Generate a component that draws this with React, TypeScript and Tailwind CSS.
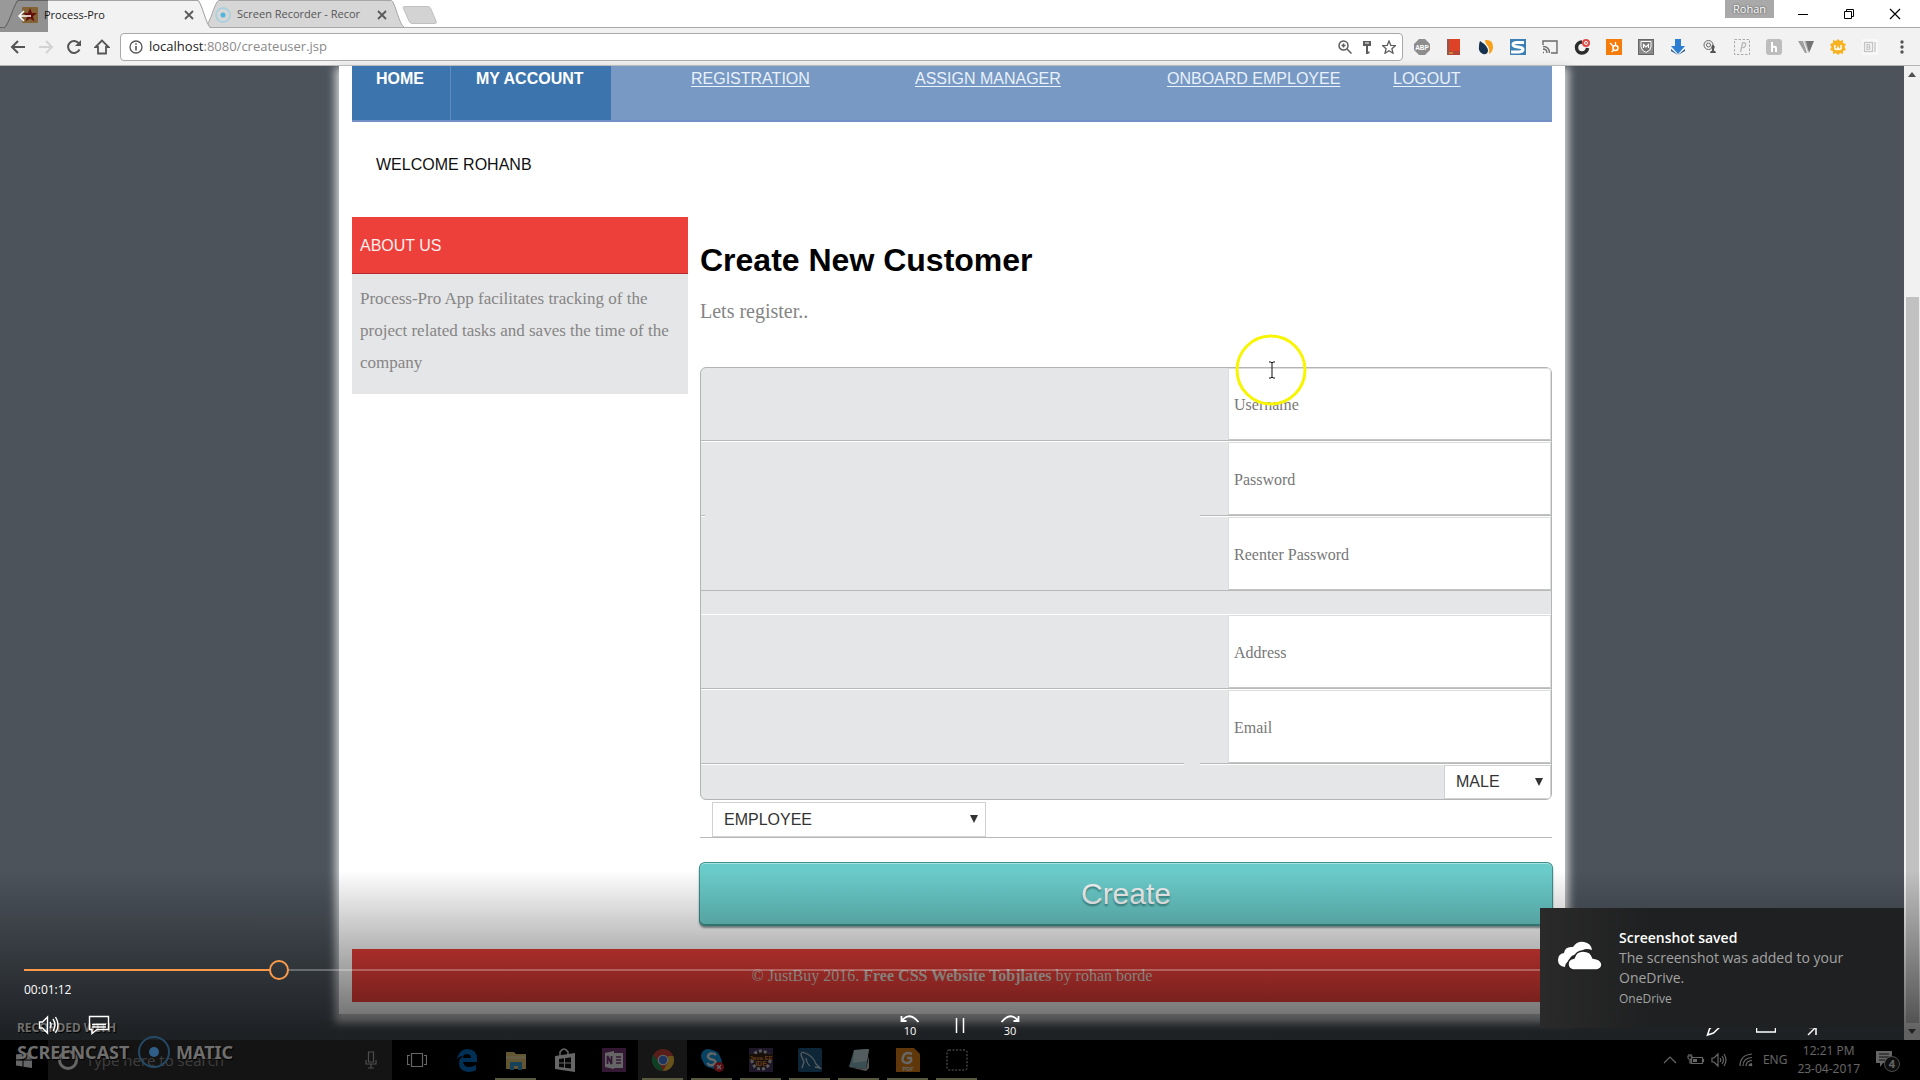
import React from "react";

type Box = { children: React.ReactNode; className?: string; vb?: string };

const Icon = ({ children, className = "size-5", vb = "0 0 20 20" }: Box) => (
  <svg viewBox={vb} className={className} fill="none" stroke="currentColor" strokeWidth="2" aria-hidden="true">
    {children}
  </svg>
);

/* ---------- browser chrome ---------- */

const CloseX = () => (
  <Icon className="size-2.5 shrink-0 text-[#5a5a5a]" vb="0 0 10 10">
    <path d="M1 1l8 8M9 1l-8 8" strokeWidth="1.8" />
  </Icon>
);

function TabShape({ fill }: { fill: string }) {
  return (
    <svg className="absolute inset-0 size-full" viewBox="0 0 205 28" preserveAspectRatio="none" aria-hidden="true">
      <path d="M0 28 C5 26 10 2 14 0.5 H192 C196 2 200 26 205 28" fill={fill} stroke="#a3a3a3" />
    </svg>
  );
}

function TabStrip() {
  return (
    <div className="relative flex h-7 items-stretch border-b border-[#a8a8a8] bg-white">
      <button className="relative z-10 ml-1 -mb-px flex w-[207px] items-center pt-0.5 pl-[18px] pr-[17px] text-left">
        <TabShape fill="#f2f2f2" />
        <svg viewBox="0 0 16 16" className="relative size-4 shrink-0" aria-hidden="true">
          <rect width="16" height="16" rx="1" fill="#dba659" />
          <path d="M8 1l2 5h5l-4 3.500 1.500 5L8 11.500 3.500 14.500 5 9.500 1 6h5z" fill="#a81c12" />
        </svg>
        <span className="relative ml-1.5 flex-1 text-[11px] text-[#222]">Process-Pro</span>
        <span className="relative"><CloseX /></span>
      </button>
      <button className="relative -ml-1.5 flex w-[199px] items-center pt-0.5 pl-2.5 pr-[17px] text-left">
        <TabShape fill="#d6d6d6" />
        <svg viewBox="0 0 16 16" className="relative size-4 shrink-0" aria-hidden="true">
          <circle cx="8" cy="8" r="7" fill="none" stroke="#9fcfe0" strokeWidth="1.300" />
          <circle cx="8" cy="8" r="2.500" fill="#4db5de" />
        </svg>
        <span className="relative ml-1.5 flex-1 overflow-hidden whitespace-nowrap text-[11px] text-[#555]">
          Screen Recorder - Recor
        </span>
        <span className="relative ml-2"><CloseX /></span>
      </button>
      <button aria-label="New tab" className="mt-1.5 -ml-0.5 h-[18px] w-9">
        <svg viewBox="0 0 36 18" className="size-full" aria-hidden="true">
          <path d="M1 1.500Q1 .5 3 .5H26Q28 .5 29 3L34 15Q35 17.500 33 17.500H10Q8 17.500 7 15Z" fill="#d3d3d3" stroke="#c0c0c0" />
        </svg>
      </button>
      <div className="flex-1" />
      <div className="mr-[23px] h-[18px] w-[49px] bg-[#a9a9a9] text-center text-[11px] leading-[18px] text-white [text-shadow:0_0_2px_#333]">
        Rohan
      </div>
      <div className="mr-[19px] flex items-center gap-[34px] text-black">
        <button aria-label="Minimize"><Icon className="size-3" vb="0 0 12 12"><path d="M1 6.500h10" strokeWidth="1" /></Icon></button>
        <button aria-label="Restore"><Icon className="size-3" vb="0 0 12 12"><path d="M1.500 3.500h7v7h-7zM3.500 3.500v-2h7v7h-2" strokeWidth="1" /></Icon></button>
        <button aria-label="Close"><Icon className="size-3" vb="0 0 12 12"><path d="M1 1l10 10M11 1L1 11" strokeWidth="1.200" /></Icon></button>
      </div>
    </div>
  );
}

const extensions: { name: string; art: React.ReactNode }[] = [
  { name: "Adblock", art: <><path d="M5 0h6l5 5v6l-5 5H5l-5-5V5z" fill="#8d8d8d" /><text x="8" y="10.500" fontSize="6.500" fontWeight="bold" textAnchor="middle" fill="#fff" fontFamily="Liberation Sans">ABP</text></> },
  { name: "Book", art: <><path d="M2 0h12v12H2z" fill="#dd4227" /><path d="M1 0h2v16H1z" fill="#8a5a50" /><path d="M3 12h11v4H3z" fill="#b5453a" /><path d="M3 13.500h4v1H3z" fill="#f5c12e" /></> },
  { name: "Similar", art: <><path d="M2 2Q10 7 10 12q-1 4-5 3-5-2-4-8 0-3 1-5z" fill="#16324f" /><path d="M7 1q8-1 8 7 0 5-4 7 1-6-2-9-2-2-2-5z" fill="#f9a01b" /></> },
  { name: "S", art: <><rect width="16" height="16" fill="#3d80b5" /><path d="M14 3.500H7q-4 0-4 2T8 8t5 2.500-4 2.500H1" stroke="#fff" strokeWidth="3" fill="none" /></> },
  { name: "Cast", art: <path d="M1 6V2h14v12H9M1 13.500h1M1 10q4 0 4 4M1 7.500q6.500 0 6.500 6.500" stroke="#6a6a6a" strokeWidth="1.400" fill="none" /> },
  { name: "Monitor", art: <><path d="M8 3a5.500 5.500 0 105.500 6" stroke="#2c2c2c" strokeWidth="3.500" fill="none" /><circle cx="12" cy="4" r="4" fill="#e24a4a" /><circle cx="12" cy="4" r="1.500" stroke="#fff" fill="none" /></> },
  { name: "Sprocket", art: <><rect width="16" height="16" fill="#f57c0a" /><circle cx="9.500" cy="9" r="2.500" stroke="#fff" strokeWidth="1.500" fill="none" /><path d="M9.500 6.500V3M7.500 7.500L4 4M8 11l-2.500 2" stroke="#fff" strokeWidth="1.300" /></> },
  { name: "Shield", art: <><rect x=".5" y=".5" width="15" height="15" fill="#8a8a8a" stroke="#666" /><path d="M3 2.500h10v5q0 4-5 6-5-2-5-6z" stroke="#fff" fill="#777" /><path d="M5.500 9V5.500L8 8l2.500-2.500V9" stroke="#fff" fill="none" strokeWidth="1.200" /></> },
  { name: "Download", art: <><path d="M5 0h6v7h4l-7 8-7-8h4z" fill="#2c7fd0" /><path d="M1 10l7 6 7-6v2l-7 4-7-4z" fill="#1d558f" /></> },
  { name: "Search people", art: <><circle cx="6.500" cy="6" r="4.500" stroke="#666" fill="none" /><circle cx="6.500" cy="6" r="2" stroke="#666" fill="none" /><path d="M8 14q0-2 2-2.500V10q-1-1-.5-3 1.500-2 3 0 .5 2-.5 3v1.500q2 .5 2 2.500z" fill="#555" /></> },
  { name: "Pin", art: <><rect x=".5" y=".5" width="15" height="15" stroke="#aaa" strokeDasharray="2.500 1.500" fill="none" /><path d="M6.500 13l2-9q4-1 3 2.500-1 2.500-3.500 2" stroke="#bbb" strokeWidth="1.400" fill="none" /></> },
  { name: "Honey", art: <><rect width="16" height="16" rx="3" fill="#bdbdbd" /><path d="M6 3v10M10 13V9q0-2-4-1" stroke="#fff" strokeWidth="2" fill="none" /></> },
  { name: "V", art: <><path d="M0 2h5l4 12H7z" fill="#a0a0a0" /><path d="M6 2h5l-1 11z" fill="#b5b5b5" /><path d="M8 2h8l-5 12z" fill="#747474" /></> },
  { name: "Gear", art: <><path d="M8 0l2 2 3-1 0 3 3 1-1.500 3L16 11l-3 1v3l-3-1-2 2-2-2-3 1v-3l-3-1 1.500-3L0 5l3-1V1l3 1z" fill="#f8b21f" /><path d="M5 6q-1 5 2 4.500l1-2 1 2q3 0 2-4.500" stroke="#fff" strokeWidth="1.500" fill="none" /></> },
  { name: "B", art: <><rect width="16" height="16" fill="#f8f8f8" /><rect x="2.500" y="3.500" width="8" height="9" stroke="#c4c4c4" strokeWidth="1.300" /><path d="M5 5.500h2q1.500 1.200 0 2.500 2 1.200 0 2.500H5zM5 8h2.500M13 3v10" stroke="#c2c2c2" strokeWidth="1.200" fill="none" /></> },
];

function Toolbar() {
  return (
    <div className="flex h-[38px] items-center border-b border-[#b3b3b3] bg-[#f2f2f2] text-[#555]">
      <div className="flex w-[120px] items-center gap-3 pl-[10px]">
        <button aria-label="Back"><Icon className="size-4" vb="0 0 16 16"><path d="M15 8H2M8 2L2 8l6 6" /></Icon></button>
        <button aria-label="Forward" className="text-[#d2d2d2]"><Icon className="size-4" vb="0 0 16 16"><path d="M1 8h13M8 2l6 6-6 6" /></Icon></button>
        <button aria-label="Reload"><Icon className="size-4" vb="0 0 16 16"><path d="M13.500 10.500A6 6 0 1113 4.500" /><path d="M15 1v6H9z" fill="currentColor" stroke="none" /></Icon></button>
        <button aria-label="Home"><Icon className="size-4" vb="0 0 16 16"><path d="M8 1.500L1.500 8H4v6.500h8V8h2.500z" strokeWidth="1.800" /></Icon></button>
      </div>
      <div className="flex h-7 flex-1 items-center rounded-sm border border-[#a9a9a9] bg-white pr-1.5 pl-2">
        <Icon className="size-3.5 shrink-0" vb="0 0 14 14"><circle cx="7" cy="7" r="6" strokeWidth="1.300" /><path d="M7 6v4.500M7 3.200v1.600" strokeWidth="1.600" /></Icon>
        <div className="ml-1.5 flex-1 text-[13px]">
          <span className="text-[#222]">localhost</span><span className="text-[#8a8a8a]">:8080/createuser.jsp</span>
        </div>
        <div className="flex gap-2 text-[#5c5c5c]">
          <Icon className="size-3.5" vb="0 0 14 14"><circle cx="5.500" cy="5.500" r="4.500" strokeWidth="1.500" /><path d="M9 9l4.500 4.500M3.500 5.500h4M5.500 3.500v4" strokeWidth="1.500" /></Icon>
          <Icon className="size-3.5" vb="0 0 14 14"><path d="M3 1h8v5H3z" fill="currentColor" stroke="none" /><path d="M7 6v8M7 12.500h2.500" /><path d="M5 3h4" stroke="#fff" strokeWidth="1" /></Icon>
          <Icon className="size-3.5" vb="0 0 14 14"><path d="M7 1l1.800 4.300 4.600.4-3.500 3 1.100 4.500L7 10.800l-4 2.400 1.100-4.500-3.500-3 4.600-.4z" strokeWidth="1.300" /></Icon>
        </div>
      </div>
      <div className="flex items-center gap-4 pl-[11px] pr-[44px]">
        {extensions.map((e) => (
          <button key={e.name} aria-label={e.name}>
            <svg viewBox="0 0 16 16" className="size-4" fill="none" aria-hidden="true">{e.art}</svg>
          </button>
        ))}
      </div>
      <button aria-label="Menu" className="-ml-7 mr-2.5">
        <svg viewBox="0 0 16 16" className="size-4" fill="#555" aria-hidden="true">
          <circle cx="8" cy="3" r="1.700" /><circle cx="8" cy="8" r="1.700" /><circle cx="8" cy="13" r="1.700" />
        </svg>
      </button>
    </div>
  );
}

/* ---------- web page ---------- */

const navLink = "text-[#e9f1fb] underline underline-offset-2";

function Nav() {
  return (
    <nav className="flex h-14 border-b-2 border-[#7390c6] bg-[#7799c4] leading-[26px]">
      <a href="#home" className="w-[99px] border-r border-[#5c8cc0] bg-[#3c74ae] pl-6 font-bold text-white">HOME</a>
      <a href="#account" className="w-40 bg-[#3c74ae] pl-[25px] font-bold text-white">MY ACCOUNT</a>
      <div className="w-20" />
      <div className="w-56"><a href="#registration" className={navLink}>REGISTRATION</a></div>
      <div className="w-[252px]"><a href="#assign" className={navLink}>ASSIGN MANAGER</a></div>
      <div className="w-[226px]"><a href="#onboard" className={navLink}>ONBOARD EMPLOYEE</a></div>
      <a href="#logout" className={navLink}>LOGOUT</a>
    </nav>
  );
}

const Segment = ({ className }: { className: string }) => (
  <div className={"border-t border-b border-t-[#b7b9b9] border-b-white " + className} />
);

function Field({ id, label, type = "text", height = "h-[73px]" }: { id: string; label: string; type?: string; height?: string }) {
  return (
    <div className={"flex " + height}>
      <label htmlFor={id} className="flex-1" />
      <input
        id={id}
        type={type}
        aria-label={label}
        placeholder={label}
        className="w-[323px] border border-[#dcdede] border-b-[#c4c6c6] bg-white px-[5px] pt-0.5 font-['Liberation_Serif',serif] text-base placeholder:text-[#777]"
      />
    </div>
  );
}

function Choice({ id, label, value, className }: { id: string; label: string; value: string; className: string }) {
  return (
    <div className={"relative bg-white " + className}>
      <select id={id} aria-label={label} className="size-full appearance-none border border-[#d0d2d2] pl-[11px] text-base text-[#333]">
        <option>{value}</option>
      </select>
      <svg viewBox="0 0 8 8" className="pointer-events-none absolute top-[13px] right-2 size-2" fill="#333" aria-hidden="true">
        <path d="M0 0h8L4 8z" />
      </svg>
    </div>
  );
}

function CreateForm() {
  return (
    <form onSubmit={(e) => e.preventDefault()}>
      <div className="overflow-hidden rounded-md border border-[#b3b5b5] bg-[#e5e6e8]">
        <Field id="username" label="Username" height="h-[72px]" />
        <Segment className="h-0.5" />
        <Field id="password" label="Password" type="password" />
        <div className="flex justify-between">
          <Segment className="h-0.5 w-1" />
          <Segment className="h-0.5 w-[351px]" />
        </div>
        <Field id="reenter" label="Reenter Password" type="password" />
        <div className="h-[25px] border-t border-[#b7b9b9] border-b border-b-white" />
        <Field id="address" label="Address" />
        <Segment className="h-0.5" />
        <Field id="email" label="Email" />
        <div className="flex gap-4">
          <Segment className="h-0.5 flex-1" />
          <Segment className="h-0.5 w-[351px]" />
        </div>
        <div className="flex justify-end"><Choice id="gender" label="Gender" value="MALE" className="h-[34px] w-[107px]" /></div>
      </div>
      <div className="border-b border-[#b7b9b9] pt-0.5 pl-3">
        <Choice id="role" label="Role" value="EMPLOYEE" className="h-[35px] w-[274px]" />
      </div>
      <button className="-mx-px mt-6 block h-16 w-[calc(100%+2px)] rounded-md border border-[#3f8f8c] border-b-2 bg-[#6accca] text-3xl text-[#f4f4f4] shadow-[0_2px_2px_#8a9a9a,inset_0_1px_0_#a5e4e2] [text-shadow:0_2px_2px_#3b8583]">
        Create
      </button>
    </form>
  );
}

function Page() {
  return (
    <div className="mx-auto max-w-[1226px] bg-white px-[13px] pb-3 shadow-[0_5px_8px_4px_#c8cacc] font-['Liberation_Sans',Arial,sans-serif]">
      <Nav />
      <p className="px-6 pt-[31px] leading-6 text-[#111]">WELCOME ROHANB</p>
      <div className="flex gap-3 pt-10">
        <aside className="w-[336px] shrink-0">
          <h2 className="h-[57px] border-b border-[#b02a2e] bg-[#ee403a] px-2 leading-[58px] text-[#fbeeee]">ABOUT US</h2>
          <p className="h-[120px] bg-[#e5e6e8] px-2 pt-[9px] font-['Liberation_Serif',serif] text-[17px] leading-8 text-[#858585]">
            Process-Pro App facilitates tracking of the project related tasks and saves the time of the company
          </p>
        </aside>
        <main className="flex-1 pt-[23px]">
          <h1 className="text-[32px] leading-10 font-bold text-black">Create New Customer</h1>
          <p className="mt-4 mb-[41px] font-['Liberation_Serif',serif] text-xl leading-[30px] text-[#858585]">Lets register..</p>
          <CreateForm />
        </main>
      </div>
      <footer className="mt-[23px] h-[53px] bg-[#ee403a] text-center font-['Liberation_Serif',serif] text-base leading-[53px] text-[#ddd0c8]">
        © JustBuy 2016. <b>Free CSS Website Tobjlates</b> by rohan borde
      </footer>
    </div>
  );
}

function Scrollbar() {
  return (
    <div className="flex w-4 flex-col items-center bg-[#f1f1f1] text-[#505050]">
      <svg viewBox="0 0 8 5" className="mt-1.5 h-[5px] w-2" fill="currentColor" aria-hidden="true"><path d="M4 0l4 5H0z" /></svg>
      <div className="h-[220px]" />
      <div className="w-[13px] flex-1 bg-[#c1c1c1]" />
      <svg viewBox="0 0 8 5" className="my-1.5 h-[5px] w-2" fill="currentColor" aria-hidden="true"><path d="M0 0h8L4 5z" /></svg>
    </div>
  );
}

/* ---------- taskbar ---------- */

const apps: { name: string; open: boolean; art: React.ReactNode }[] = [
  { name: "Edge", open: false, art: <path d="M2 12Q3 2 12 1q10 0 10 10v3H8q1 5 6 5 4 0 7-2v5q-3 2-8 2-9-1-9-9 0-5 5-7-6 0-7 4zM8 10h8q0-4-4-4t-4 4z" fill="#0078d7" /> },
  { name: "File Explorer", open: true, art: <><path d="M2 4h8l2 2h10v15H2z" fill="#f5d77e" /><path d="M2 8h20v3H2z" fill="#fbe9a8" /><path d="M6 22v-8h12v8h-4v-4h-4v4z" fill="#38a3dc" /></> },
  { name: "Store", open: false, art: <><path d="M2 8l20-3v19L2 21z" fill="#fff" /><path d="M7 8V4q4-6 8 0v3" stroke="#fff" strokeWidth="1.500" fill="none" /><path d="M6 11l5-.7v4.200H6zM12 10.200l6-.9v5.200h-6zM6 15.500h5v4L6 19zM12 15.500h6v5l-6-.8z" fill="#111" /></> },
  { name: "OneNote", open: false, art: <><rect width="24" height="24" fill="#803b80" /><path d="M12 5h9v15h-9zM3 5l9-2v18l-9-2z" fill="#fff" /><path d="M5.500 16V8l4 8V8" stroke="#803b80" strokeWidth="1.800" fill="none" /><path d="M14 9h5M14 12h5M14 15h5" stroke="#803b80" strokeWidth="1.300" /></> },
  { name: "Chrome", open: true, art: <><circle cx="12" cy="12" r="11" fill="#dd4b3e" /><path d="M2.500 6.500l6 9.500L12 23A11 11 0 012.500 6.500z" fill="#1da25f" /><path d="M12 23l5-9V8h5.300A11 11 0 0112 23z" fill="#ffcd42" /><circle cx="12" cy="12" r="5.300" fill="#fff" /><circle cx="12" cy="12" r="4.200" fill="#4a86ee" /></> },
  { name: "Skype", open: true, art: <><circle cx="8" cy="8" r="7" fill="#12a5f4" /><circle cx="15" cy="14" r="7" fill="#12a5f4" /><circle cx="11.500" cy="11" r="9" fill="#12a5f4" /><path d="M16 7q-2-2-5-1.500T8 9q1 2 4 2.500t3.500 2.500-3 3-5-2" stroke="#fff" strokeWidth="2.400" fill="none" /><circle cx="19" cy="19" r="5" fill="#e0202c" /><path d="M17 17l4 4M21 17l-4 4" stroke="#fff" strokeWidth="1.300" /></> },
  { name: "Java EE IDE", open: true, art: <><rect width="24" height="24" fill="#4c3a68" /><circle cx="12" cy="12" r="9" stroke="#ddd" strokeWidth="3" strokeDasharray="3 2" fill="#3b2a30" /><rect y="6" width="24" height="6" fill="#3b2418" /><text x="12" y="11.500" fontSize="6" fontWeight="bold" textAnchor="middle" fill="#f2963a" fontFamily="Liberation Sans">Java EE</text><text x="12" y="18" fontSize="7" fontWeight="bold" textAnchor="middle" fill="#f2963a" fontFamily="Liberation Sans">IDE</text></> },
  { name: "MySQL Workbench", open: true, art: <><rect width="24" height="24" rx="2" fill="#23618c" /><path d="M4 20L6 14 3 7q0-4 4-2 8 3 11 11l4 4-5-1M8 10q1 6 4 8" stroke="#d8e6ef" strokeWidth="1.300" fill="none" /></> },
  { name: "Notes", open: true, art: <><path d="M7 2l15-1-3 20-17-2z" fill="#8fc6cf" /><path d="M7 2l15-1-2 12-14 2z" fill="#cfe7ea" /><path d="M2 19l17 2 3-13v12l-3 3z" fill="#d9d6cf" /></> },
  { name: "PDF", open: true, art: <><path d="M0 0h18l6 6v18H0z" fill="#ef8a17" /><path d="M16 6q-7-3-9 3t5 6q4-1 3-5h-4" stroke="#fff" strokeWidth="2.500" fill="none" /><text x="12" y="22.500" fontSize="5.500" fontWeight="bold" textAnchor="middle" fill="#fff" fontFamily="Liberation Sans">PDF</text></> },
  { name: "Snip", open: true, art: <rect x="2" y="2" width="20" height="20" rx="2" stroke="#eee" strokeDasharray="2 1.500" fill="none" /> },
];

function Taskbar() {
  return (
    <div className="flex h-10 items-stretch bg-black text-white">
      <button aria-label="Start" className="w-12 pl-4">
        <svg viewBox="0 0 16 16" className="size-4" fill="#fff" aria-hidden="true"><path d="M0 2.500l6.500-1v6H0zM7.500 1.300L16 0v7.500H7.500zM0 8.500h6.500v6l-6.500-1zM7.500 8.500H16V16l-8.500-1.300z" /></svg>
      </button>
      <div className="flex w-[344px] items-center bg-[#323232] pl-2.5 pr-[11px]">
        <div className="size-5 shrink-0 rounded-full border-[3px] border-white" />
        <input aria-label="Type here to search" placeholder="Type here to search" className="ml-2 flex-1 bg-transparent text-[15px] placeholder:text-[#9c9c9c]" />
        <Icon className="size-5 text-[#c0c0c0]"><path d="M7.500 2h5v10h-5zM5 10v4h10v-4M10 14v4M7 18h6" strokeWidth="1.200" /></Icon>
      </div>
      <button aria-label="Task View" className="grid w-[50px] place-items-center">
        <Icon className="size-5"><path d="M4.500 3.500h11v13h-11zM3 5.500H.5v9H3M17 5.500h2.500v9H17" strokeWidth="1.200" /></Icon>
      </button>
      {apps.map((a) => (
        <button
          key={a.name}
          aria-label={a.name}
          className={"relative grid w-[49px] place-items-center " + (a.name === "Chrome" ? "bg-[#363636]" : "")}
        >
          <svg viewBox="0 0 24 24" className="size-6" fill="none" aria-hidden="true">{a.art}</svg>
          {a.open && <span className="absolute inset-x-1 bottom-0 h-0.5 bg-[#e0e0a0]" />}
        </button>
      ))}
      <div className="flex-1" />
      <div className="flex items-center gap-2.5 pr-5 text-xs">
        <Icon className="size-3.5" vb="0 0 14 14"><path d="M1 10l6-6 6 6" strokeWidth="1.200" /></Icon>
        <div className="flex items-center gap-1.5">
          <Icon className="h-4 w-[18px]" vb="0 0 18 16"><path d="M4.500 5.500h11v6h-11zM16.500 7v3M1 4h4v2q-2 3-4 0zM3 7v4h1M2 2v2M4 2v2" strokeWidth="1.200" /><path d="M6 7h4v3H6z" fill="currentColor" stroke="none" /></Icon>
          <Icon className="size-4" vb="0 0 16 16"><path d="M1 6h2l4-4v12L3 10H1zM9 6q1.500 2 0 4M11 4q3 4 0 8M13 2q4 6 0 12" strokeWidth="1.200" /></Icon>
          <Icon className="ml-1.5 size-3.5" vb="0 0 14 14"><path d="M1 13Q1 2 13 1M4 13Q4 5 13 4.500M7 13q0-5 6-5.500M10 13q0-2 3-2.500" strokeWidth="1.200" /><circle cx="12" cy="12" r="1.300" fill="currentColor" stroke="none" /></Icon>
        </div>
        <span>ENG</span>
        <div className="text-center leading-[18px]"><div>12:21 PM</div><div>23-04-2017</div></div>
        <button aria-label="Notifications" className="relative ml-1.5 size-6">
          <svg viewBox="0 0 24 24" className="size-6" aria-hidden="true">
            <path d="M0 3h16v12H7l-3 4v-4H0z" fill="#fff" />
            <path d="M3 6h10M3 9h10M3 12h6" stroke="#222" />
            <circle cx="16" cy="16" r="7.500" fill="#222" stroke="#bbb" />
          </svg>
          <span className="absolute right-1 bottom-0 w-2 text-[11px] font-bold">4</span>
        </button>
      </div>
    </div>
  );
}

/* ---------- overlays ---------- */

function PlayerControls() {
  return (
    <div className="absolute inset-x-0 bottom-10 h-20 text-white">
      <input
        aria-label="Seek"
        type="range"
        step={0.01}
        defaultValue={13.23}
        className="absolute top-0 right-6 left-6 h-5 appearance-none bg-[linear-gradient(to_right,#fb9a4b_247px,transparent_247px_264px,#ffffff44_264px)] bg-[length:100%_2px] bg-center bg-no-repeat [&::-webkit-slider-thumb]:size-5 [&::-webkit-slider-thumb]:appearance-none [&::-webkit-slider-thumb]:rounded-full [&::-webkit-slider-thumb]:border-2 [&::-webkit-slider-thumb]:border-[#fb9a4b]"
      />
      <div className="absolute top-5 left-6 text-xs leading-5">00:01:12</div>
      <div className="absolute bottom-1 left-[38px] flex gap-7">
        <button aria-label="Volume"><Icon className="size-[22px]" vb="0 0 22 22"><path d="M1.500 8h3l5-5v16l-5-5h-3zM12 8q2 3 0 6M15 5q4 6 0 12M17.500 3q5 8 0 16" strokeWidth="1.400" /></Icon></button>
        <button aria-label="Subtitles"><Icon className="size-[22px]" vb="0 0 22 22"><path d="M1.500 2.500h19v13H9l-5 4v-4H1.500zM4 10.500h14M4 13h14" strokeWidth="1.400" /></Icon></button>
      </div>
      <div className="absolute inset-x-0 bottom-1 flex justify-center gap-[30px]">
        <button aria-label="Back 10 seconds" className="relative h-[22px] w-5">
          <Icon className="h-[22px] w-5" vb="0 0 20 22"><path d="M1.500 2v5h5M1.500 7q8-10 17 1" strokeWidth="1.800" /></Icon>
          <span className="absolute inset-x-0 -bottom-px text-[11px] leading-3">10</span>
        </button>
        <button aria-label="Pause"><Icon className="h-[22px] w-5" vb="0 0 20 22"><path d="M6.500 4v15M13.500 4v15" strokeWidth="1.500" /></Icon></button>
        <button aria-label="Forward 30 seconds" className="relative h-[22px] w-5">
          <Icon className="h-[22px] w-5" vb="0 0 20 22"><path d="M18.500 2v5h-5M18.500 7q-8-10-17 1" strokeWidth="1.800" /></Icon>
          <span className="absolute inset-x-0 -bottom-px text-[11px] leading-3">30</span>
        </button>
      </div>
      <div className="absolute right-[94px] bottom-0.5 flex gap-[30px]">
        <button aria-label="Edit"><Icon><path d="M1.500 17l2-6L14 1l4 4L7.500 15z" strokeWidth="1.500" /></Icon></button>
        <button aria-label="Cast to device"><Icon><path d="M.5 4h19v10H.5z" strokeWidth="1.500" /></Icon></button>
        <button aria-label="Full screen"><Icon><path d="M2 17L17 2" strokeWidth="1.500" /><path d="M3 9.500h7V17" strokeWidth="1.500" /></Icon></button>
      </div>
    </div>
  );
}

function Watermark() {
  return (
    <div className="pointer-events-none absolute bottom-3 left-[17px] font-['Noto_Sans',sans-serif] font-bold text-[#6f6f6f] [text-shadow:1px_1px_1px_#000]">
      <div className="text-xs leading-4">RECORDED WITH</div>
      <div className="flex items-center gap-1.5 text-lg leading-8">
        <span className="w-[115px]">SCREENCAST</span>
        <span className="grid size-8 place-items-center rounded-full border-2 border-[#234a68]"><span className="size-2.5 rounded-full bg-[#2f5f88]" /></span>
        <span>MATIC</span>
      </div>
    </div>
  );
}

function Toast() {
  return (
    <div role="status" className="absolute right-4 bottom-[52px] flex h-[120px] w-[364px] bg-[linear-gradient(to_right,#2a2a2a,#1f2021_30%)] pl-[17px]">
      <svg viewBox="0 0 46 30" className="mt-[33px] h-[30px] w-[46px] shrink-0" fill="#fff" aria-hidden="true">
        <path d="M8 26Q1 25 1 19t6-7q1-7 9-6 4-6 11-5 7 1 8 8-9-3-13 4-9 0-10 7-4 2-4 6z" />
        <path d="M16 29q-5-1-5-6t6-6q2-7 9-7 8 0 10 7 8 1 9 6 0 5-5 6z" stroke="#222" strokeWidth="1.500" />
      </svg>
      <div className="ml-4 pt-5 text-sm leading-5 text-[#a3a3a3]">
        <div className="font-semibold text-white">Screenshot saved</div>
        <div>The screenshot was added to your<br />OneDrive.</div>
        <div className="text-xs leading-[22px]">OneDrive</div>
      </div>
    </div>
  );
}

export default function App() {
  return (
    <div className="relative flex min-h-screen flex-col overflow-hidden bg-[#4c535b] font-['Open_Sans',sans-serif]">
      <TabStrip />
      <Toolbar />
      <div className="flex flex-1">
        <div className="flex-1 pb-[25px]"><Page /></div>
        <Scrollbar />
      </div>
      <Taskbar />

      <button aria-label="Go back" className="absolute top-0 left-0 z-20 h-8 w-12 bg-black/40 pl-[17px] text-white">
        <Icon className="size-4" vb="0 0 16 16"><path d="M14 8H2M7 3L2 8l5 5" strokeWidth="1.500" /></Icon>
      </button>
      <svg viewBox="0 0 72 74" className="pointer-events-none absolute top-[333px] left-[1235px] h-[74px] w-[72px]" fill="none" aria-hidden="true">
        <circle cx="36" cy="37" r="34" stroke="#f8f500" strokeWidth="3" />
        <path d="M34 29h2l1 1 1-1h2M37 30v14M34 45h2l1-1 1 1h2" stroke="#111" />
      </svg>
      <div className="pointer-events-none absolute inset-x-0 bottom-0 h-[210px] bg-[linear-gradient(to_bottom,transparent,#00000099_77%)]" />
      <Watermark />
      <PlayerControls />
      <Toast />
    </div>
  );
}
